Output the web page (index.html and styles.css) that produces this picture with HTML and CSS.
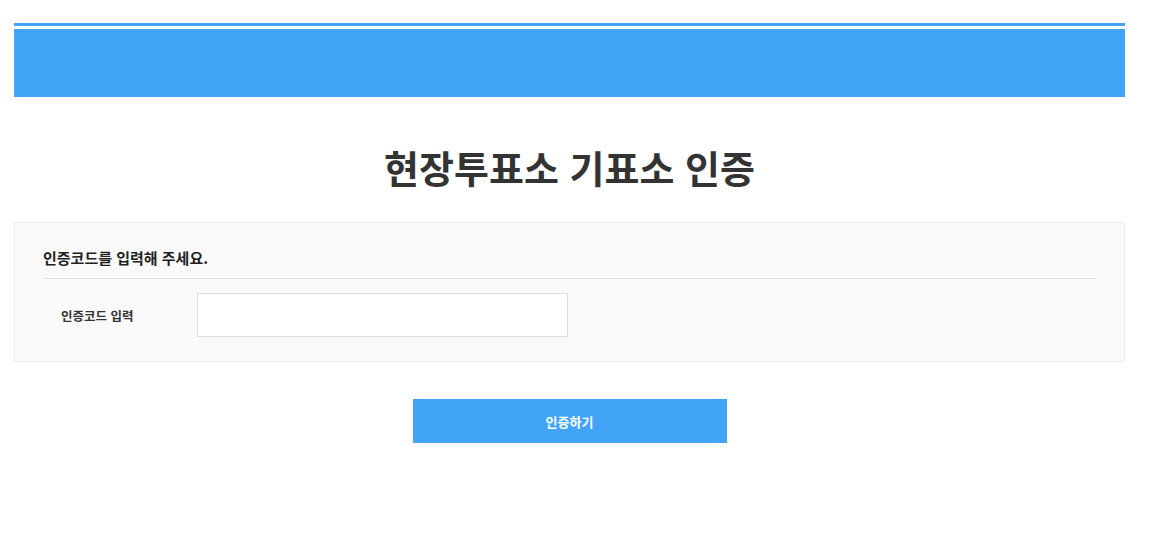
FILE: index.html
```html
<!DOCTYPE html>
<html lang="ko">
<head>
  <meta charset="UTF-8" />
  <meta name="viewport" content="width=device-width, initial-scale=1.0"/>
  <title>현장투표소 기표소 인증</title>
  <link rel="stylesheet" href="styles.css">
</head>
<body>
  <div class="wrap">
    <div class="header">
      <div class="header-bar"></div>
    </div>

    <h1 class="title">현장투표소 기표소 인증</h1>

    <div class="panel">
      <h2 class="panel-title">인증코드를 입력해 주세요.</h2>
      <div class="field">
        <label class="field-label" for="auth-code">인증코드 입력</label>
        <input class="field-input" type="text" id="auth-code" />
      </div>
    </div>

    <div class="actions">
      <button class="submit-btn" type="button">인증하기</button>
    </div>
  </div>
</body>
</html>
```

FILE: styles.css
```css
body {
  margin: 0;
  font-family: "Noto Sans CJK KR", "Noto Sans", sans-serif;
  background: #fff;
  color: #333;
}

.wrap {
  width: 1111px;
  margin-left: 14px;
  padding-top: 23px;
}

.header {
  border-top: 3px solid #42a4f6;
  padding-top: 3px;
}

.header-bar {
  height: 68px;
  background: #42a4f6;
}

.title {
  margin: 46px 0 0;
  height: 79px;
  font-size: 38px;
  font-weight: 700;
  line-height: 48px;
  text-align: center;
  color: #333;
}

.panel {
  background: #fafafa;
  border: 1px solid #ececec;
  padding: 20px 28px 24px;
}

.panel-title {
  margin: 0;
  padding: 4px 0 9px;
  font-size: 15px;
  font-weight: 700;
  line-height: 22px;
  color: #222;
  border-bottom: 1px solid #e0e0e0;
}

.field {
  display: flex;
  align-items: center;
  margin-top: 14px;
}

.field-label {
  width: 136px;
  padding-left: 18px;
  font-size: 12.5px;
  font-weight: 700;
  color: #333;
}

.field-input {
  width: 371px;
  height: 44px;
  box-sizing: border-box;
  border: 1px solid #ddd;
  background: #fff;
  margin: 0;
}

.actions {
  display: flex;
  justify-content: center;
  margin-top: 37px;
}

.submit-btn {
  width: 314px;
  height: 44px;
  border: none;
  background: #42a4f6;
  color: #fff;
  font-family: inherit;
  font-size: 13px;
  font-weight: 700;
  cursor: pointer;
  margin-left: 0;
}
```
